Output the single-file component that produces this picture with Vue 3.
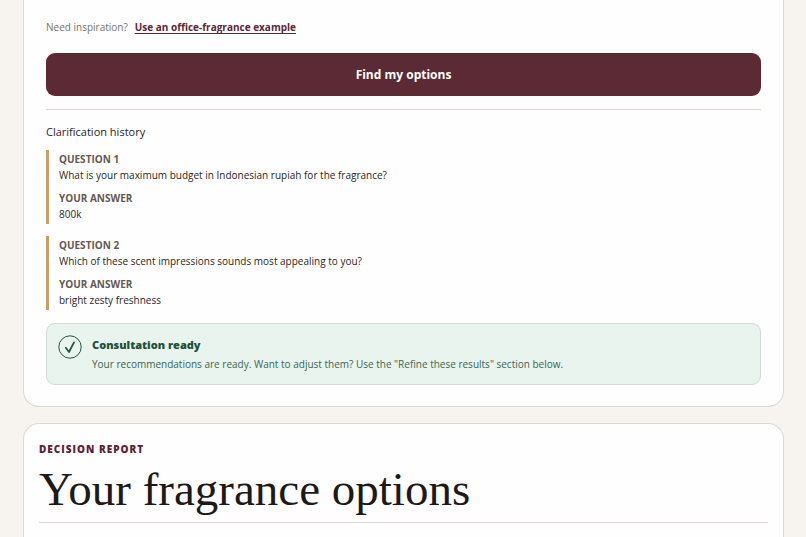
<template>
  <main class="page">
    <section class="card consultation">
      <p class="inspiration">
        Need inspiration?
        <a class="example-link" href="#example">Use an office-fragrance example</a>
      </p>

      <button class="btn-submit" type="button">Find my options</button>

      <div class="history">
        <h2 class="history-title">Clarification history</h2>
        <dl v-for="(item, i) in history" :key="i" class="history-item">
          <dt>Question {{ i + 1 }}</dt>
          <dd>{{ item.question }}</dd>
          <dt>Your answer</dt>
          <dd>{{ item.answer }}</dd>
        </dl>
      </div>

      <div class="status" role="status">
        <svg class="status-icon" viewBox="0 0 24 24" aria-hidden="true">
          <circle cx="12" cy="12" r="11.2" />
          <path class="tick" d="M7.8 12.8l3.2 4.2L16 7.4" />
        </svg>
        <div>
          <h3 class="status-title">Consultation ready</h3>
          <p class="status-text">
            Your recommendations are ready. Want to adjust them? Use the "Refine these results" section below.
          </p>
        </div>
      </div>
    </section>

    <section class="card report">
      <header class="report-header">
        <p class="eyebrow">Decision report</p>
        <h1 class="report-title">Your fragrance options</h1>
      </header>
    </section>
  </main>
</template>

<script setup>
import { ref } from 'vue';

const history = ref([
  {
    question: 'What is your maximum budget in Indonesian rupiah for the fragrance?',
    answer: '800k',
  },
  {
    question: 'Which of these scent impressions sounds most appealing to you?',
    answer: 'bright zesty freshness',
  },
]);
</script>

<style>
body {
  background: #f7f3ee;
}
</style>

<style scoped>
h1, h2, h3, p, dl, dd {
  margin: 0;
}

.page {
  display: flex;
  flex-direction: column;
  gap: 16px;
  height: 100vh;
  padding: 0 22px 0 23px;
  box-sizing: border-box;
  overflow: hidden;
  color: #2b2725;
  font-family: "Open Sans", "Noto Sans", sans-serif;
  font-size: 10px;
  line-height: 16px;
}

.card {
  flex-shrink: 0;
  background: #fefefe;
  border: 1px solid #ddd8d2;
}

.consultation {
  padding: 19px 22px 21px;
  border-top: none;
  border-radius: 0 0 16px 16px;
}

.inspiration {
  display: flex;
  gap: 7px;
  color: #77716d;
}

.example-link {
  color: #5a2934;
  font-weight: 700;
  text-decoration: underline;
  text-underline-offset: 2px;
}

.btn-submit {
  display: block;
  width: 100%;
  height: 43px;
  margin: 18px 0 13px;
  border: none;
  border-radius: 9px;
  background: #5b2a35;
  color: #fff;
  font-family: inherit;
  font-size: 12px;
  font-weight: 700;
  cursor: pointer;
}
.btn-submit:hover { background: #4a202a; }

.history {
  padding-top: 14px;
  border-top: 1px solid #ddd8d2;
}

.history-title {
  font-size: 11px;
  font-weight: 400;
}

.history-item {
  padding: 1px 0 1px 10px;
  border-left: 3px solid #c4a066;
}

.history-title + .history-item {
  margin-top: 10px;
}

.history-item + .history-item {
  margin-top: 12px;
}

.history-item dt {
  color: #645953;
  font-weight: 700;
  text-transform: uppercase;
}

.history-item dd {
  line-height: 17px;
}

.history-item dd + dt {
  margin-top: 6px;
}

.status {
  display: flex;
  gap: 10px;
  margin-top: 13px;
  padding: 11px 11px 12px;
  border: 1px solid #d3dbd5;
  border-radius: 9px;
  background: #eaf4ef;
  color: #37674f;
}

.status-icon {
  flex-shrink: 0;
  width: 24px;
  height: 24px;
  fill: none;
  stroke: #24573f;
  stroke-width: 1;
}

.tick {
  stroke-width: 1.8;
  stroke-linecap: round;
  stroke-linejoin: round;
}

.status-title {
  margin-bottom: 1px;
  color: #1c5138;
  font-size: 11px;
  font-weight: 800;
  line-height: 20px;
}

.report {
  flex-grow: 1;
  padding: 17px 15px;
  border-radius: 16px 16px 0 0;
  border-bottom: none;
}

.report-header {
  padding-bottom: 1px;
  border-bottom: 1px solid #ddd8d2;
}

.eyebrow {
  color: #5a2339;
  font-size: 10px;
  font-weight: 800;
  letter-spacing: 1px;
  text-transform: uppercase;
}

.report-title {
  color: #1d1916;
  font-family: "Liberation Serif", serif;
  font-size: 47px;
  font-weight: 400;
  line-height: 64px;
}
</style>
